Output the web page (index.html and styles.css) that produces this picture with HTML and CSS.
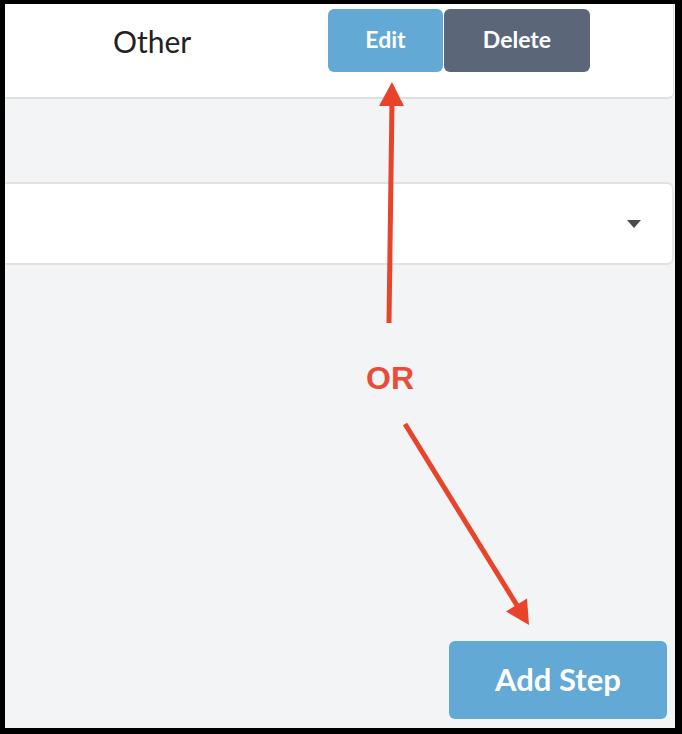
FILE: index.html
```html
<!DOCTYPE html>
<html lang="en">
<head>
<meta charset="utf-8">
<title>Steps</title>
<link rel="stylesheet" href="styles.css">
</head>
<body>
<div class="frame">
  <div class="step-card">
    <div class="step-name">Other</div>
    <div class="step-actions">
      <button class="btn btn-edit">Edit</button>
      <button class="btn btn-delete">Delete</button>
    </div>
  </div>

  <div class="select-card">
    <span class="caret"></span>
  </div>

  <div class="footer">
    <button class="btn btn-add">Add Step</button>
  </div>

  <svg class="callouts" width="682" height="734" viewBox="0 0 682 734" aria-hidden="true">
    <line x1="389" y1="323" x2="392" y2="100" class="arrow-line"/>
    <polygon points="392,82 379,106 404,106" class="arrow-head"/>
    <text x="366" y="389" class="callout-text">OR</text>
    <line x1="405" y1="424" x2="518" y2="607" class="arrow-line"/>
    <polygon points="529,625 506,611.5 527,598.5" class="arrow-head"/>
  </svg>
</div>
</body>
</html>
```

FILE: styles.css
```css
* {
  box-sizing: border-box;
}

html, body {
  margin: 0;
  padding: 0;
}

body {
  font-family: Lato, "Open Sans", sans-serif;
  background: #000;
}

.frame {
  position: relative;
  width: 682px;
  height: 734px;
  border-style: solid;
  border-color: #000;
  border-width: 4px 7px 6px 5px;
  background: #f3f4f6;
  display: flex;
  flex-direction: column;
  padding-right: 1px;
  overflow: hidden;
}

/* existing step row */
.step-card {
  display: flex;
  align-items: center;
  background: #fff;
  border-right: 1px solid #e3e3e3;
  border-bottom: 2px solid #e0e0e0;
  border-bottom-right-radius: 6px;
  padding: 5px 0 25px;
}

.step-name {
  width: 323px;
  padding-left: 108px;
  font-size: 30px;
  color: #222;
  line-height: 1;
}

.step-actions {
  display: flex;
  gap: 1px;
}

.btn {
  border: none;
  font-family: Lato, "Open Sans", sans-serif;
  font-weight: 700;
  color: #fff;
  border-radius: 6px;
  padding: 0 0 3px;
  cursor: pointer;
}

.btn-edit {
  width: 115px;
  height: 63px;
  font-size: 23px;
  background: #62a9d5;
}

.btn-delete {
  width: 146px;
  height: 63px;
  font-size: 23px;
  background: #5b6779;
}

/* empty step-type select */
.select-card {
  margin-top: 83px;
  height: 83px;
  background: #fff;
  border-top: 2px solid #e1e1e1;
  border-bottom: 2px solid #e1e1e1;
  border-right: 2px solid #e6e6e6;
  border-radius: 0 7px 7px 0;
  display: flex;
  align-items: center;
  justify-content: flex-end;
  padding-right: 31px;
}

.caret {
  width: 0;
  height: 0;
  border-left: 7px solid transparent;
  border-right: 7px solid transparent;
  border-top: 8px solid #4a4a4a;
  margin-top: 1px;
}

.footer {
  flex: 1;
  display: flex;
  justify-content: flex-end;
  align-items: flex-end;
  padding: 0 7px 9px 0;
}

.btn-add {
  width: 218px;
  height: 78px;
  font-size: 31px;
  background: #62a9d5;
}

/* annotation layer drawn over the page */
.callouts {
  position: absolute;
  top: -4px;
  left: -5px;
  pointer-events: none;
}

.arrow-line {
  stroke: #e8442b;
  stroke-width: 5;
}

.arrow-head {
  fill: #e8442b;
}

.callout-text {
  font-family: "Liberation Sans", Arial, sans-serif;
  font-weight: 700;
  font-size: 32px;
  fill: #ea4c3b;
}
```
